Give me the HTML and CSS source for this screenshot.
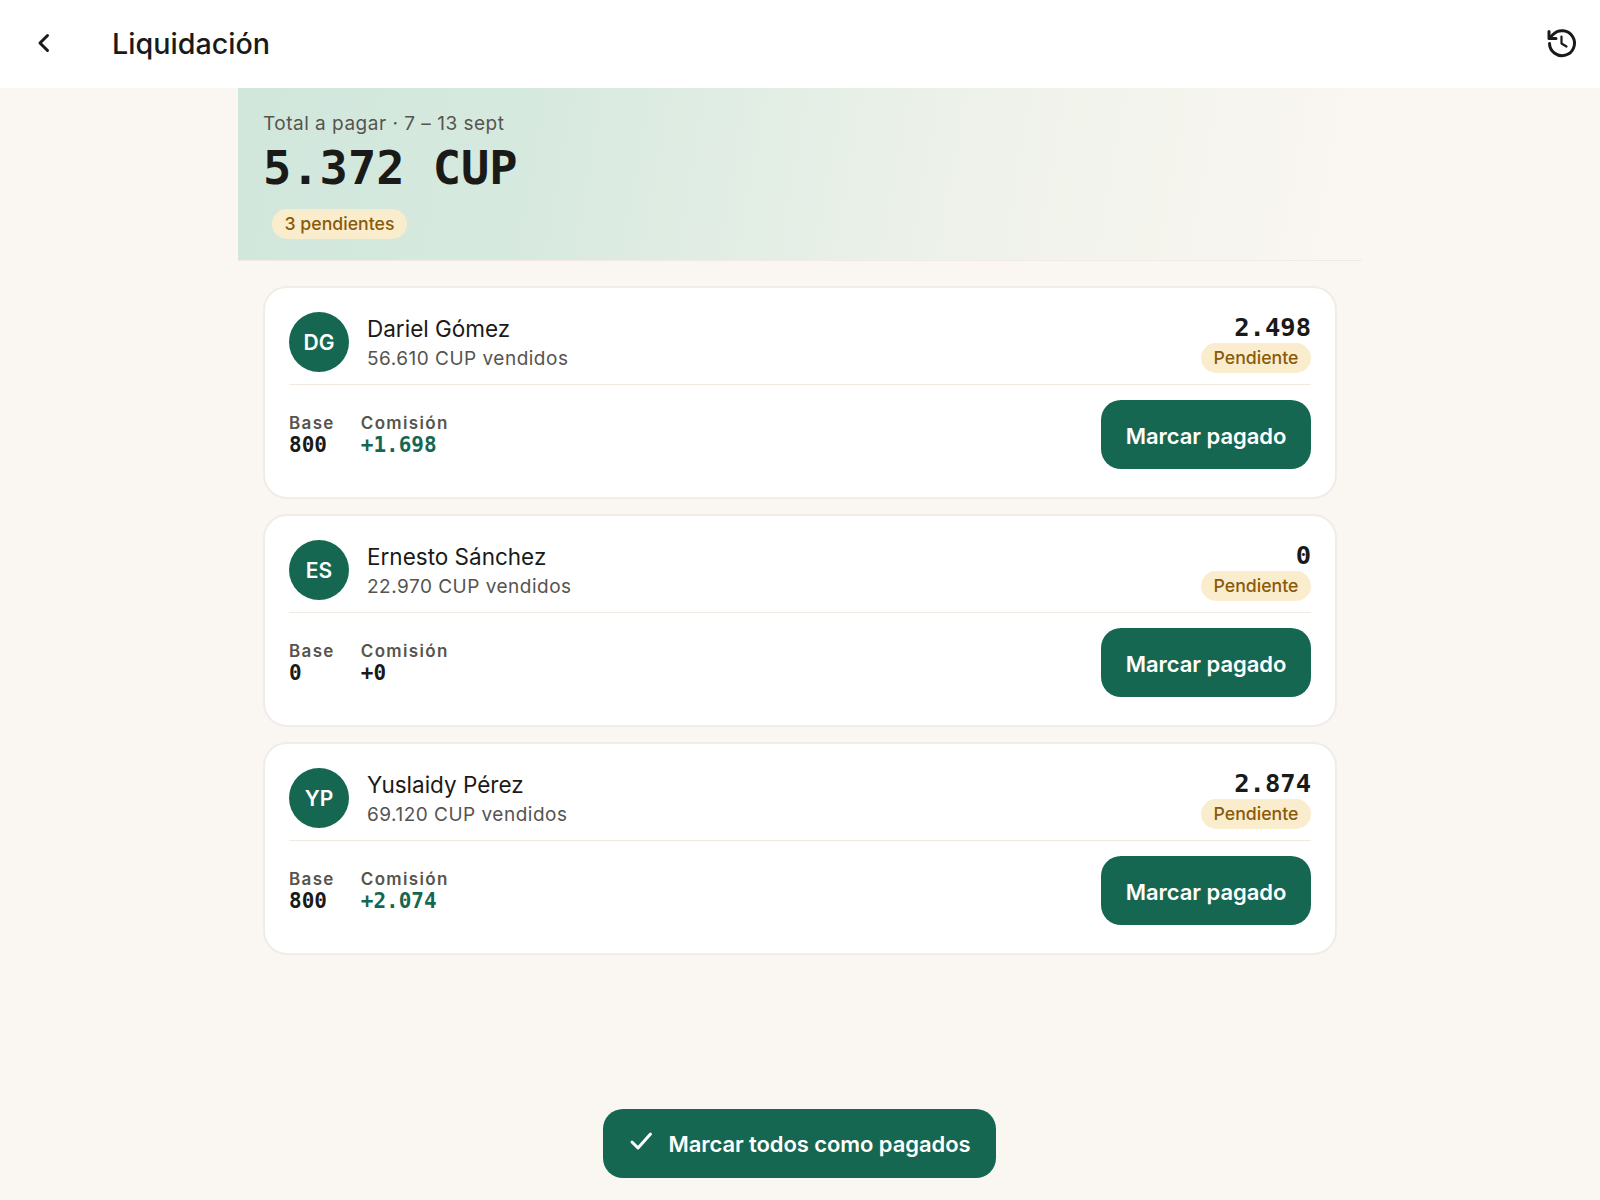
FILE: index.html
```html
<!DOCTYPE html>
<html lang="es">
<head>
    <meta charset="UTF-8">
    <title>Liquidación</title>
    <link rel="stylesheet" href="styles.css">
</head>
<body>
    <header class="topbar">
        <button class="icon-btn back" aria-label="Volver">
            <svg width="24" height="24" viewBox="0 0 24 24" fill="none" stroke="#1a1a18" stroke-width="3" stroke-linecap="round" stroke-linejoin="round"><path d="M15.5 4.5 8 12l7.5 7.5"/></svg>
        </button>
        <h1>Liquidación</h1>
        <button class="icon-btn history" aria-label="Historial">
            <svg width="34" height="34" viewBox="0 0 34 34" fill="none" stroke="#1a1a18" stroke-width="3" stroke-linecap="round" stroke-linejoin="round"><path d="M5.5 17.5A12.5 12.5 0 1 0 9 8.5L5.5 12"/><path d="M5 5.5V12.5H12"/><path d="M17.5 10.5V17.5L22.5 20.5" stroke-width="2.2"/></svg>
        </button>
    </header>

    <main class="content">
        <section class="hero">
            <div class="hero-label">Total a pagar · 7 – 13 sept</div>
            <div class="hero-total">5.372 CUP</div>
            <span class="badge hero-badge">3 pendientes</span>
        </section>

        <div class="cards">
            <article class="card">
                <div class="card-top">
                    <div class="avatar">DG</div>
                    <div class="person">
                        <div class="name">Dariel Gómez</div>
                        <div class="sold">56.610 CUP vendidos</div>
                    </div>
                    <div class="amount">
                        <div class="amount-value">2.498</div>
                        <span class="badge">Pendiente</span>
                    </div>
                </div>
                <div class="card-bottom">
                    <div class="stat">
                        <div class="stat-label">Base</div>
                        <div class="stat-value">800</div>
                    </div>
                    <div class="stat">
                        <div class="stat-label">Comisión</div>
                        <div class="stat-value positive">+1.698</div>
                    </div>
                    <button class="pay-btn">Marcar pagado</button>
                </div>
            </article>

            <article class="card">
                <div class="card-top">
                    <div class="avatar">ES</div>
                    <div class="person">
                        <div class="name">Ernesto Sánchez</div>
                        <div class="sold">22.970 CUP vendidos</div>
                    </div>
                    <div class="amount">
                        <div class="amount-value">0</div>
                        <span class="badge">Pendiente</span>
                    </div>
                </div>
                <div class="card-bottom">
                    <div class="stat">
                        <div class="stat-label">Base</div>
                        <div class="stat-value">0</div>
                    </div>
                    <div class="stat">
                        <div class="stat-label">Comisión</div>
                        <div class="stat-value">+0</div>
                    </div>
                    <button class="pay-btn">Marcar pagado</button>
                </div>
            </article>

            <article class="card">
                <div class="card-top">
                    <div class="avatar">YP</div>
                    <div class="person">
                        <div class="name">Yuslaidy Pérez</div>
                        <div class="sold">69.120 CUP vendidos</div>
                    </div>
                    <div class="amount">
                        <div class="amount-value">2.874</div>
                        <span class="badge">Pendiente</span>
                    </div>
                </div>
                <div class="card-bottom">
                    <div class="stat">
                        <div class="stat-label">Base</div>
                        <div class="stat-value">800</div>
                    </div>
                    <div class="stat">
                        <div class="stat-label">Comisión</div>
                        <div class="stat-value positive">+2.074</div>
                    </div>
                    <button class="pay-btn">Marcar pagado</button>
                </div>
            </article>
        </div>

        <div class="footer-action">
            <button class="pay-all">
                <svg class="pay-all-check" width="24" height="20" viewBox="0 0 24 20" fill="none" stroke="#fff" stroke-width="3" stroke-linecap="round" stroke-linejoin="round"><path d="M3 11l6 6L21.5 3"/></svg>
                Marcar todos como pagados
            </button>
        </div>
    </main>
</body>
</html>
```

FILE: styles.css
```css
* {
    box-sizing: border-box;
}

html, body {
    height: 100%;
}

body {
    margin: 0;
    display: flex;
    flex-direction: column;
    font-family: Inter, "Noto Sans", sans-serif;
    background-color: #faf6f1;
    color: #1a1a18;
}

button {
    font-family: inherit;
    border: none;
    cursor: pointer;
}

.topbar {
    height: 88px;
    flex-shrink: 0;
    display: flex;
    align-items: center;
    background-color: #fff;
    padding: 0 22px 2px 32px;
}

.topbar h1 {
    margin: 0 0 0 56px;
    font-size: 28.7px;
    font-weight: 500;
}

.icon-btn {
    padding: 0;
    background: none;
    display: flex;
}

.history {
    margin-left: auto;
}

.content {
    flex: 1;
    width: 1124px;
    margin: 0 auto;
    display: flex;
    flex-direction: column;
}

.hero {
    height: 173px;
    padding: 24px 25px 0;
    background: linear-gradient(100deg, #d1e7dc 0%, #d6e9df 25%, #eef2ea 65%, #faf6f1 97%);
    border-bottom: 1px solid #efe9e2;
}

.hero-label {
    font-size: 19px;
    line-height: 24px;
    color: #56544f;
    letter-spacing: 0.5px;
}

.hero-total {
    margin-top: 3px;
    font-family: "DejaVu Sans Mono", monospace;
    font-size: 47px;
    line-height: 58px;
    font-weight: 700;
}

.badge {
    display: inline-block;
    height: 30px;
    padding: 0 12.5px;
    border-radius: 15px;
    background-color: #faedcd;
    color: #8a5a0b;
    font-size: 17.7px;
    font-weight: 500;
    line-height: 30px;
}

.hero-badge {
    margin: 12px 0 0 9px;
}

.cards {
    padding: 25px 25px 0;
    display: flex;
    flex-direction: column;
    gap: 15px;
}

.card {
    height: 213px;
    padding: 24px 24px 0;
    background-color: #fff;
    border: 2px solid #f1ece6;
    border-radius: 24px;
}

.card-top {
    height: 73px;
    display: flex;
    border-bottom: 1px solid #efe9e2;
}

.avatar {
    width: 60px;
    height: 60px;
    border-radius: 50%;
    margin-right: 18px;
    background-color: #166751;
    color: #fff;
    font-size: 21px;
    font-weight: 600;
    display: flex;
    align-items: center;
    justify-content: center;
}

.name {
    margin-top: 2px;
    font-size: 22.5px;
    line-height: 30px;
}

.sold {
    margin-top: 2px;
    font-size: 19px;
    line-height: 26px;
    color: #56544f;
    letter-spacing: 0.5px;
}

.amount {
    margin-left: auto;
    display: flex;
    flex-direction: column;
    align-items: flex-end;
}

.amount-value {
    font-family: "DejaVu Sans Mono", monospace;
    font-size: 25.5px;
    line-height: 30px;
    font-weight: 700;
    margin-bottom: 1px;
}

.card-bottom {
    margin-top: 15px;
    display: flex;
    align-items: center;
    gap: 26px;
}

.stat {
    margin-bottom: 2px;
}

.stat-label {
    font-size: 17px;
    line-height: 22px;
    font-weight: 600;
    color: #56544f;
    letter-spacing: 1.35px;
}

.stat-value {
    font-family: "DejaVu Sans Mono", monospace;
    font-size: 21px;
    line-height: 22px;
    font-weight: 700;
}

.stat-value.positive {
    color: #166751;
}

.pay-btn {
    margin-left: auto;
    width: 210px;
    height: 69px;
    padding-top: 3px;
    border-radius: 20px;
    background-color: #166751;
    color: #fff;
    font-size: 22px;
    font-weight: 600;
    letter-spacing: -0.05px;
}

.footer-action {
    margin-top: auto;
    padding: 0 1px 22px 0;
    display: flex;
    justify-content: center;
}

.pay-all {
    width: 393px;
    height: 69px;
    padding-top: 2px;
    border-radius: 20px;
    background-color: #166751;
    color: #fff;
    font-size: 22px;
    font-weight: 600;
    letter-spacing: -0.08px;
    display: flex;
    align-items: center;
    justify-content: center;
    gap: 16px;
}

.pay-all-check {
    margin-bottom: 6px;
}
```
